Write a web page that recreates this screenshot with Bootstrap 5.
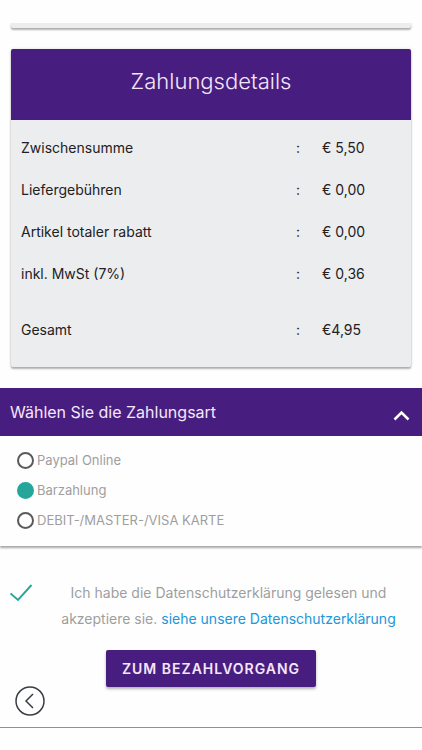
<!DOCTYPE html>
<html lang="de">
<head>
<meta charset="utf-8">
<meta name="viewport" content="width=device-width, initial-scale=1">
<title>Zahlungsdetails</title>
<link href="https://cdn.jsdelivr.net/npm/bootstrap@5.3.0/dist/css/bootstrap.min.css" rel="stylesheet">
<style>
  body { font-family: Inter, "Liberation Sans", sans-serif; font-size: 14px; line-height: 26px; color: #212124; background: #fefefe; }
  .brand-bg { background: #471e7f; color: #f6e6fb; }
  .panel { background: #ecedef; margin: 0 11px; border-radius: 2px; box-shadow: 0 2px 2px rgba(0,0,0,.28), 0 0 3px rgba(0,0,0,.16); }
  .prev-panel { height: 5px; margin-top: 23px; clip-path: inset(0 -6px -8px -6px); }
  .details { margin-top: 21px; }
  .details-title { font-size: 22px; font-weight: 300; line-height: 32px; padding: 16px 0 23px; border-radius: 2px 2px 0 0; }
  .details-body { padding: 7px 10px 16px; }
  .sums { width: 100%; }
  .sums th { font-weight: 400; }
  .sums th, .sums td { padding: 8px 0; }
  .sums .colon { width: 26px; }
  .sums .amount { width: 79px; }
  .sums .total th, .sums .total td { padding-top: 22px; }
  .pay { margin-top: 21px; box-shadow: 0 2px 2px rgba(0,0,0,.34); }
  .pay-toggle { border: 0; font-size: 16px; line-height: 48px; padding: 0 12px 0 10px; }
  .pay-toggle svg { margin-top: 6px; }
  .options { padding: 9px 17px 11px; background: #fefefe; color: #9e9e9e; font-size: 13px; }
  .option { height: 30px; gap: 3px; }
  .options label { line-height: 30px; }
  .pick { appearance: none; width: 17px; height: 17px; margin: 0; border: 2px solid #5a5a5a; border-radius: 50%; }
  .pick:checked { background: #26a69a; border-color: #26a69a; }
  .consent { margin-top: 34px; padding: 0 10px; color: #9e9e9e; }
  .tick { appearance: none; width: 23px; height: 18px; margin: 4px 0 0; flex: none; border: 0; }
  .tick:checked { background: url("data:image/svg+xml,%3Csvg xmlns='http://www.w3.org/2000/svg' viewBox='0 0 23 18'%3E%3Cpath d='M.5 9.500 8 16 21.500 1' fill='none' stroke='%2326a69a' stroke-width='1.900'/%3E%3C/svg%3E") no-repeat; }
  .consent-text { padding: 0 6px 0 18px; }
  .consent a { color: #2196d8; }
  .checkout { margin-top: 18px; border: 0; border-radius: 2px; padding: 0 16px; font-size: 14px; font-weight: 600; line-height: 37px; letter-spacing: 1px; color: #f6e6fb; box-shadow: 0 2px 3px rgba(0,0,0,.3); }
  .footer-bar { padding: 0 15px 11px; border-bottom: 1px solid #8f9094; margin-top: -1px; }
  .back { border: 0; padding: 0; background: none; }
</style>
</head>
<body>
<main>
  <div class="panel prev-panel"></div>

  <section class="panel details">
    <h1 class="brand-bg details-title text-center mb-0">Zahlungsdetails</h1>
    <div class="details-body">
      <table class="sums">
        <tbody>
          <tr><th scope="row">Zwischensumme</th><td class="colon">:</td><td class="amount">€ 5,50</td></tr>
          <tr><th scope="row">Liefergebühren</th><td class="colon">:</td><td class="amount">€ 0,00</td></tr>
          <tr><th scope="row">Artikel totaler rabatt</th><td class="colon">:</td><td class="amount">€ 0,00</td></tr>
          <tr><th scope="row">inkl. MwSt (7%)</th><td class="colon">:</td><td class="amount">€ 0,36</td></tr>
          <tr class="total"><th scope="row">Gesamt</th><td class="colon">:</td><td class="amount">€4,95</td></tr>
        </tbody>
      </table>
    </div>
  </section>

  <section class="pay">
    <button class="brand-bg pay-toggle d-flex w-100 justify-content-between align-items-center" type="button" data-bs-toggle="collapse" data-bs-target="#methods" aria-expanded="true" aria-controls="methods">
      <span>Wählen Sie die Zahlungsart</span>
      <svg width="17" height="11" viewBox="0 0 17 11" fill="none" stroke="#fff" stroke-width="2.500" aria-hidden="true"><path d="M1.500 9.500 8.500 2.500 15.500 9.500"/></svg>
    </button>
    <div class="collapse show" id="methods">
      <div class="options">
        <div class="option d-flex align-items-center"><input class="pick" type="radio" name="method" id="paypal"><label for="paypal">Paypal Online</label></div>
        <div class="option d-flex align-items-center"><input class="pick" type="radio" name="method" id="cash" checked><label for="cash">Barzahlung</label></div>
        <div class="option d-flex align-items-center"><input class="pick" type="radio" name="method" id="card"><label for="card">DEBIT-/MASTER-/VISA KARTE</label></div>
      </div>
    </div>
  </section>

  <div class="consent d-flex align-items-start">
    <input class="tick" type="checkbox" id="privacy" checked>
    <div class="consent-text flex-grow-1 text-center">
      <label class="d-inline" for="privacy">Ich habe die Datenschutzerklärung gelesen und akzeptiere sie.</label>
      <a class="text-decoration-none" href="#datenschutz">siehe unsere Datenschutzerklärung</a>
    </div>
  </div>

  <div class="text-center">
    <button class="brand-bg checkout" type="submit">ZUM BEZAHLVORGANG</button>
  </div>

  <div class="footer-bar d-flex">
    <button class="back d-flex" type="button" aria-label="Zurück">
      <svg width="30" height="30" viewBox="0 0 30 30" fill="none" stroke="#3a3d46" stroke-width="1.500" aria-hidden="true"><circle cx="15" cy="15" r="14"/><path d="M18 8 11 15 18 22"/></svg>
    </button>
  </div>
</main>
<script src="https://cdn.jsdelivr.net/npm/bootstrap@5.3.0/dist/js/bootstrap.bundle.min.js"></script>
</body>
</html>
